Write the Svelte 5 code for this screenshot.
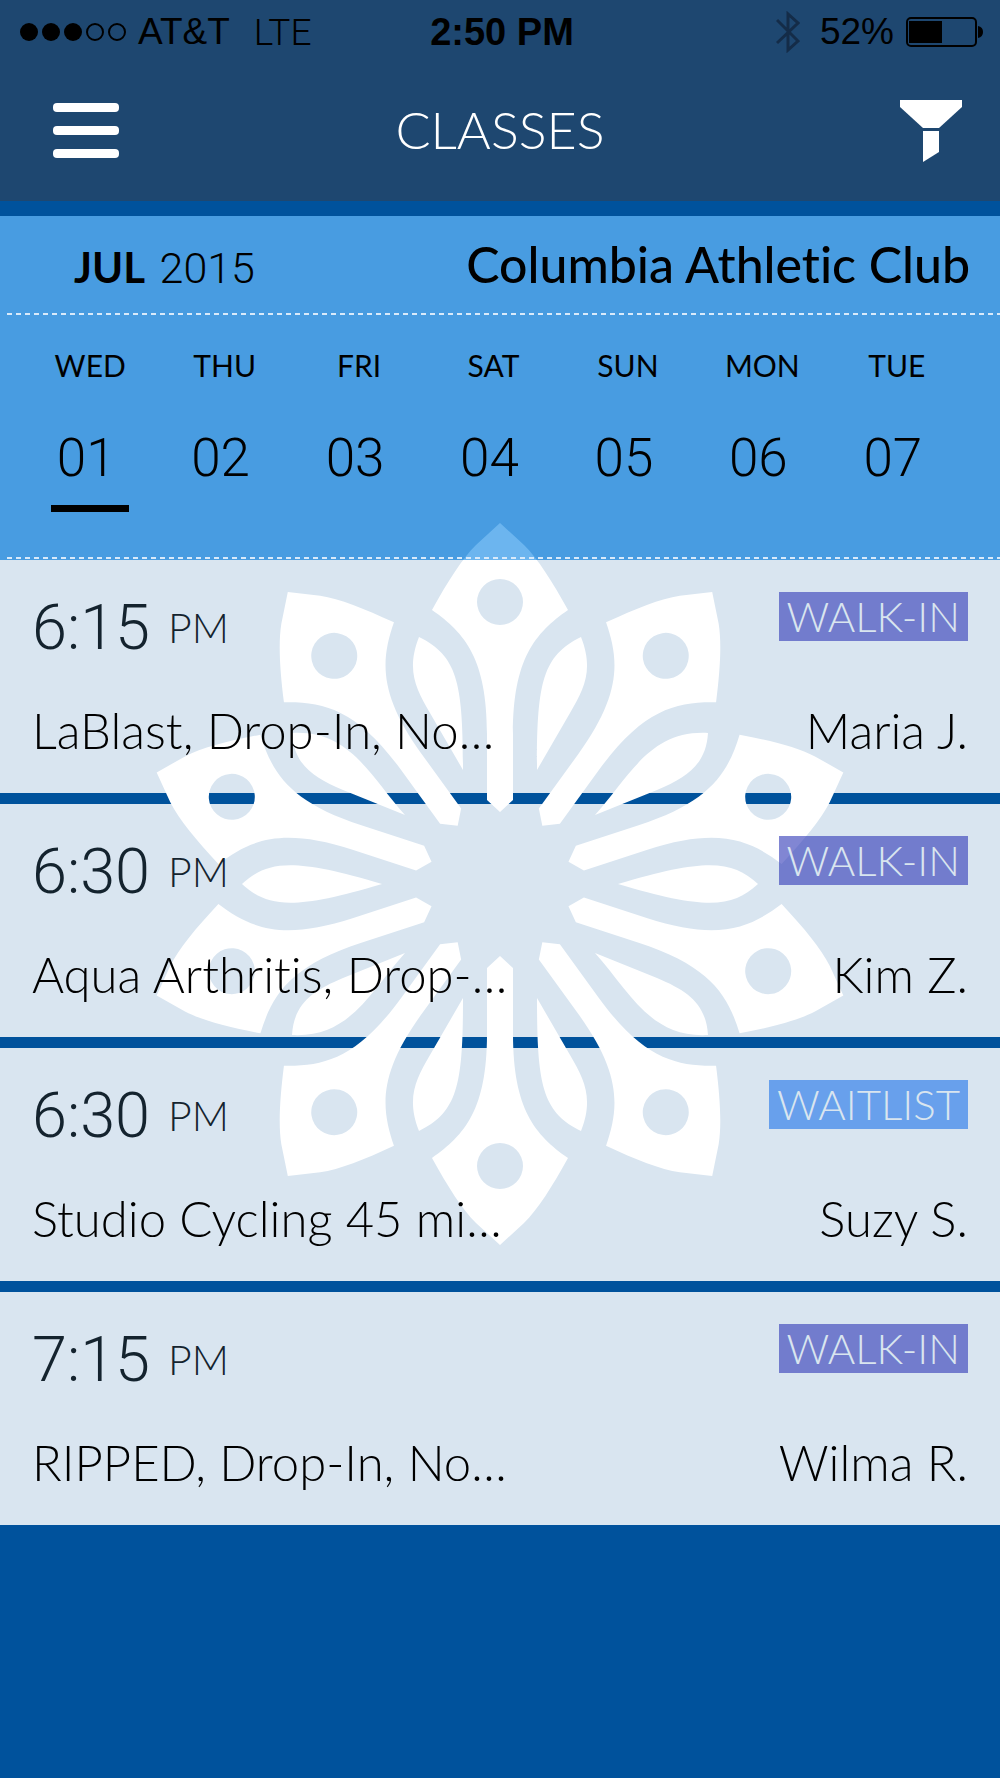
<script>
  let month = "JUL";
  let year = 2015;
  let club = "Columbia Athletic Club";
  let selected = "01";

  const days = [
    { name: "WED", date: "01" },
    { name: "THU", date: "02" },
    { name: "FRI", date: "03" },
    { name: "SAT", date: "04" },
    { name: "SUN", date: "05" },
    { name: "MON", date: "06" },
    { name: "TUE", date: "07" },
  ];

  const classes = [
    { time: "6:15", title: "LaBlast, Drop-In, No…", coach: "Maria J.", status: "WALK-IN" },
    { time: "6:30", title: "Aqua Arthritis, Drop-…", coach: "Kim Z.", status: "WALK-IN" },
    { time: "6:30", title: "Studio Cycling 45 mi…", coach: "Suzy S.", status: "WAITLIST" },
    { time: "7:15", title: "RIPPED, Drop-In, No…", coach: "Wilma R.", status: "WALK-IN" },
  ];

  const petals = Array.from({ length: 10 }, (_, i) => i * 36);

  // the leaves of one quarter are mirrored into the other three
  const quarters = ["1 1", "-1 1", "1 -1", "-1 -1"];
</script>

<header>
  <div class="status-bar">
    <div class="carrier">
      <svg width="106" height="20" viewBox="0 0 106 20" aria-hidden="true">
        <circle cx="9" cy="10" r="9" />
        <circle cx="31" cy="10" r="9" />
        <circle cx="53" cy="10" r="9" />
        <circle class="empty" cx="75" cy="10" r="8" />
        <circle class="empty" cx="97" cy="10" r="8" />
      </svg>
      <span>AT&amp;T</span>
      <span class="network">LTE</span>
    </div>
    <span class="clock">2:50 PM</span>
    <div class="battery">
      <svg class="bluetooth" width="24" height="42" viewBox="0 0 24 42" aria-hidden="true">
        <path d="M1 9 L22 30 L12 39 V3 L22 12 L1 32" />
      </svg>
      <span>52%</span>
      <svg width="78" height="30" viewBox="0 0 78 30" aria-hidden="true">
        <rect class="shell" x="1" y="1" width="69" height="28" rx="4" />
        <rect x="3" y="4" width="33" height="22" />
        <path d="M72 9 Q77 10 77 15 Q77 20 72 21 Z" />
      </svg>
    </div>
  </div>

  <nav>
    <button class="menu" aria-label="Menu">
      <svg width="66" height="56" viewBox="0 0 66 56">
        <rect y="0" width="66" height="9" rx="4" />
        <rect y="23" width="66" height="9" rx="4" />
        <rect y="46" width="66" height="9" rx="4" />
      </svg>
    </button>
    <h1>CLASSES</h1>
    <button class="filter" aria-label="Filter">
      <svg width="62" height="62" viewBox="0 0 62 62">
        <path d="M0 0 H62 V7 L39 28 H23 L0 7 Z" />
        <path d="M23 31 H39 V52 L23 62 Z" />
      </svg>
    </button>
  </nav>
</header>

<main>
  <section class="calendar">
    <div class="calendar-head">
      <p class="month"><strong>{month}</strong> {year}</p>
      <h2>{club}</h2>
    </div>
    <div class="days">
      {#each days as day}
        <button class="day" class:active={day.date === selected} on:click={() => (selected = day.date)}>
          <span class="day-name">{day.name}</span>
          <span class="day-date">{day.date}</span>
        </button>
      {/each}
    </div>
  </section>

  <section class="schedule">
    <svg class="flower" width="724" height="724" viewBox="-362 -362 724 724" aria-hidden="true">
      {#each petals as angle}
        <path
          transform="rotate({angle})"
          fill-rule="evenodd"
          d="M0 -361 L24 -339 C38 -325 52 -303 68 -274 C35 -251 13 -225 13 -150 V-84 L0 -72 L-13 -84 V-150 C-13 -225 -35 -251 -68 -274 C-52 -303 -38 -325 -24 -339 Z
             M-23 -282 a23 23 0 1 0 46 0 a23 23 0 1 0 -46 0 Z"
        />
      {/each}
      {#each quarters as quarter}
        <g transform="scale({quarter})">
          <path d="M81 -247 C94 -214 84 -195 70 -171 L37 -114 C37 -200 42 -228 81 -247 Z" />
          <path d="M208 -151 C206 -120 188 -107 157 -94 L95 -69 C130 -108 150 -154 208 -151 Z" />
          <path d="M258 0 C232 -24 205 -26 118 0 Z" />
        </g>
      {/each}
    </svg>

    <ul>
      {#each classes as item}
        <li>
          <div class="line">
            <p class="time">{item.time} <span class="meridiem">PM</span></p>
            <span class="badge" class:waitlist={item.status === "WAITLIST"}>{item.status}</span>
          </div>
          <div class="line">
            <h3>{item.title}</h3>
            <p class="coach">{item.coach}</p>
          </div>
        </li>
      {/each}
    </ul>
  </section>
</main>

<style>
  :global(body) {
    margin: 0;
    background: #00529c;
    font-family: Lato, "Open Sans", sans-serif;
    font-variant-ligatures: none;
    color: #000;
  }

  h1,
  h2,
  h3,
  p,
  ul {
    margin: 0;
    padding: 0;
    font-weight: 300;
  }

  button {
    padding: 0;
    border: none;
    background: none;
    color: inherit;
    font: inherit;
    cursor: pointer;
  }

  svg {
    display: block;
  }

  header {
    background: #1e4770;
  }

  .status-bar {
    display: grid;
    grid-template-columns: 1fr auto 1fr;
    align-items: center;
    height: 64px;
    padding: 0 16px 0 20px;
    font-family: "Liberation Sans", Arial, sans-serif;
    font-size: 37px;
  }

  .carrier,
  .battery {
    display: flex;
    align-items: center;
    gap: 12px;
  }

  .battery {
    justify-content: flex-end;
  }

  .network {
    margin-left: 12px;
    font-family: Roboto, sans-serif;
    font-weight: 300;
  }

  .clock {
    font-weight: bold;
    font-size: 38px;
  }

  .empty,
  .shell {
    fill: none;
    stroke: #000;
    stroke-width: 2;
  }

  .bluetooth {
    margin-right: 8px;
    fill: none;
    stroke: #142c48;
    stroke-width: 3;
  }

  nav {
    display: grid;
    grid-template-columns: 1fr auto 1fr;
    align-items: center;
    height: 133px;
    padding-bottom: 4px;
  }

  nav svg {
    fill: #fff;
  }

  .menu {
    justify-self: start;
    margin-left: 53px;
  }

  .filter {
    justify-self: end;
    margin-right: 38px;
  }

  h1 {
    font-size: 52px;
    line-height: 60px;
    padding-bottom: 4px;
    color: #fff;
  }

  /* the flower sits at z-index -1 inside this stacking context */
  main {
    isolation: isolate;
    padding-top: 15px;
  }

  .calendar {
    background: rgba(84, 169, 236, 0.86);
  }

  .calendar-head,
  .days {
    position: relative;
  }

  .calendar-head::after,
  .days::after {
    content: "";
    position: absolute;
    left: 7px;
    right: 0;
    bottom: 1px;
    height: 2px;
    background: repeating-linear-gradient(90deg, #d9eafa 0 5px, transparent 5px 9px);
  }

  .calendar-head {
    display: flex;
    justify-content: space-between;
    align-items: baseline;
    height: 84px;
    padding: 16px 30px 0 74px;
  }

  .month {
    font-family: Roboto, sans-serif;
    font-size: 43px;
  }

  .month strong {
    margin-right: 4px;
    font-family: Lato, sans-serif;
    font-size: 42px;
    font-weight: 700;
  }

  h2 {
    font-size: 50px;
    font-weight: 500;
    line-height: 64px;
  }

  .days {
    display: grid;
    grid-template-columns: repeat(7, 1fr);
    padding: 31px 36px 48px 23px;
  }

  .day {
    display: flex;
    flex-direction: column;
    align-items: center;
  }

  .day-name {
    font-size: 30px;
    line-height: 36px;
  }

  .day-date {
    box-sizing: border-box;
    width: 78px;
    margin-top: 42px;
    padding: 0 8px 14px 0;
    border-bottom: 7px solid transparent;
    font-family: Roboto, sans-serif;
    font-size: 53px;
    font-weight: 300;
    line-height: 66px;
  }

  .active .day-date {
    border-color: #000;
  }

  .schedule {
    position: relative;
  }

  .flower {
    position: absolute;
    top: -38px;
    left: 50%;
    z-index: -1;
    transform: translateX(-50%);
    fill: #fff;
  }

  ul {
    display: flex;
    flex-direction: column;
    gap: 11px;
    list-style: none;
  }

  li {
    display: flex;
    flex-direction: column;
    gap: 32px;
    padding: 28px 32px 33px;
    background: rgba(255, 255, 255, 0.85);
  }

  .line {
    display: flex;
    justify-content: space-between;
  }

  .time {
    display: flex;
    align-items: center;
    gap: 18px;
    font-family: Roboto, sans-serif;
    font-size: 63px;
    line-height: 80px;
    color: #14232e;
  }

  .meridiem {
    font-family: Lato, sans-serif;
    font-size: 41px;
  }

  .badge {
    align-self: flex-start;
    margin-top: 4px;
    padding: 0 8px;
    background: rgba(45, 54, 182, 0.6);
    font-size: 42px;
    font-weight: 300;
    line-height: 49px;
    color: #d9e5ef;
  }

  .waitlist {
    background: #68a0ec;
  }

  h3,
  .coach {
    font-size: 49px;
    line-height: 60px;
  }
</style>
